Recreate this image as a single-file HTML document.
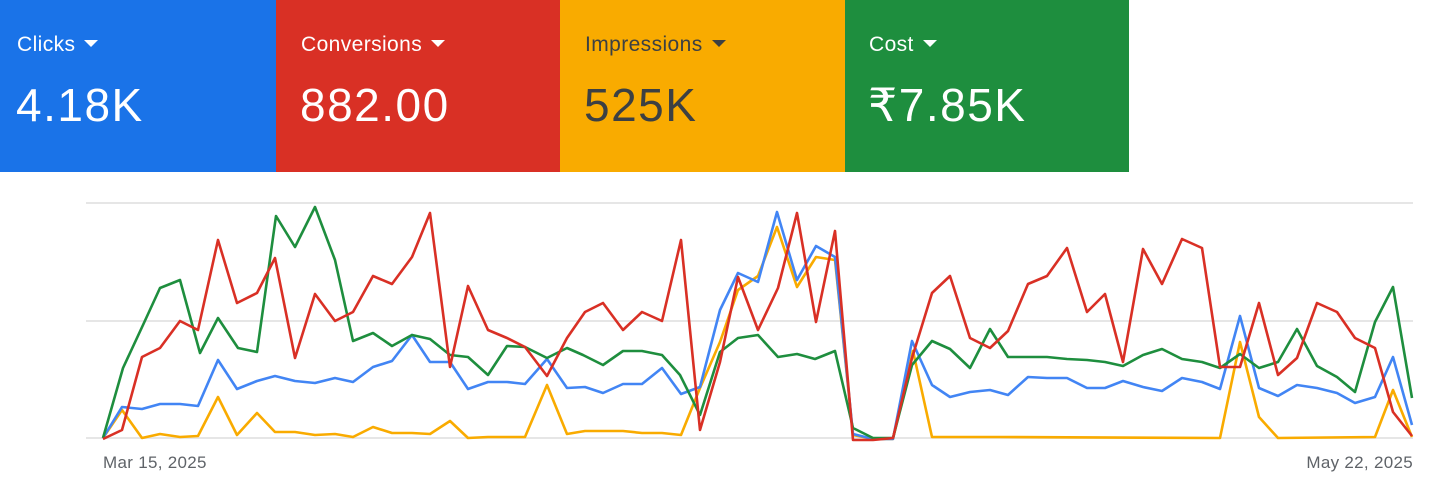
<!DOCTYPE html>
<html><head><meta charset="utf-8"><style>
body{margin:0;width:1440px;height:501px;background:#fff;position:relative;overflow:hidden;font-family:"Liberation Sans",Arial,sans-serif}
.t{position:absolute;top:0;height:172px}
.l{position:absolute;top:33px;font-size:21px;letter-spacing:0.4px}
.v{position:absolute;top:78px;font-size:46px;letter-spacing:1.5px}
.a{display:inline-block;width:0;height:0;border-left:7px solid transparent;border-right:7px solid transparent;border-top:7px solid currentColor;vertical-align:middle;margin-left:9px;margin-top:-3px}
.d{position:absolute;top:453px;font-size:17px;color:#5f6368;letter-spacing:0.3px}
</style></head><body>
<div class="t" style="left:0;width:276px;background:#1a73e8;color:#fff"><div class="l" style="left:17px">Clicks<span class="a"></span></div><div class="v" style="left:16px">4.18K</div></div>
<div class="t" style="left:276px;width:284px;background:#d93025;color:#fff"><div class="l" style="left:25px">Conversions<span class="a"></span></div><div class="v" style="left:24px">882.00</div></div>
<div class="t" style="left:560px;width:285px;background:#f9ab00;color:#3c4043"><div class="l" style="left:25px">Impressions<span class="a"></span></div><div class="v" style="left:24px">525K</div></div>
<div class="t" style="left:845px;width:284px;background:#1e8e3e;color:#fff"><div class="l" style="left:24px">Cost<span class="a"></span></div><div class="v" style="left:23px">₹7.85K</div></div>
<svg width="1440" height="501" style="position:absolute;left:0;top:0" fill="none" stroke-width="2.6" stroke-linejoin="round">
<g stroke="#e6e6e6" stroke-width="2"><line x1="86" y1="203" x2="1413" y2="203"/><line x1="86" y1="321" x2="1413" y2="321"/><line x1="86" y1="438" x2="1413" y2="438"/></g>
<polyline stroke="#f9ab00" points="103,438 122,410 142,438 160,434 180,437 198,436 218,397 237,435 257,413 275,432 295,432 315,435 335,434 353,437 373,427 392,433 412,433 430,434 450,421 468,438 488,437 507,437 525,437 547,385 567,434 585,431 603,431 623,431 642,433 662,433 681,435 700,388 720,342 738,290 758,276 777,227 797,287 816,257 835,260 853,435 873,439 893,439 913,351 932,437 1000,437 1220,438 1240,342 1259,417 1278,438 1375,437 1393,390 1412,437"/>
<polyline stroke="#4285f4" points="103,438 122,407 142,409 160,404 180,404 198,406 218,360 237,389 257,381 275,376 295,381 315,383 335,378 353,382 373,367 392,361 412,335 430,362 450,362 468,389 488,382 507,382 525,384 547,359 567,388 585,387 603,393 623,384 642,384 662,368 681,394 700,387 720,310 738,273 758,282 777,212 797,280 816,246 835,257 853,434 873,439 893,439 912,341 932,385 950,397 970,392 990,390 1008,395 1028,377 1047,378 1067,378 1087,388 1105,388 1123,381 1143,387 1162,391 1182,378 1202,382 1220,389 1240,316 1259,388 1278,396 1297,385 1317,388 1337,393 1355,403 1375,397 1393,357 1412,425"/>
<polyline stroke="#1e8e3e" points="103,438 123,368 143,325 160,288 180,280 200,353 218,318 238,348 257,352 276,216 295,247 315,207 335,260 353,341 373,333 392,346 412,335 430,339 450,355 468,357 488,375 507,346 525,347 547,358 567,348 583,355 603,365 623,351 642,351 662,355 680,375 700,415 720,352 738,338 758,335 778,357 797,354 815,359 835,351 853,428 873,438 893,438 912,365 932,341 950,349 970,368 990,329 1008,357 1028,357 1047,357 1067,359 1087,360 1105,362 1123,366 1143,355 1162,349 1182,359 1202,362 1220,368 1240,354 1259,368 1278,362 1297,329 1317,366 1337,377 1355,392 1375,322 1393,287 1412,398"/>
<polyline stroke="#d93025" points="103,439 122,430 142,357 160,348 180,321 198,330 218,240 237,303 257,293 275,258 295,358 315,294 335,321 353,312 373,276 392,284 412,257 430,213 450,367 468,286 488,330 507,338 525,347 547,376 567,338 585,312 603,303 623,330 642,312 662,321 681,240 700,430 720,362 738,277 758,330 778,288 797,213 816,322 835,231 853,440 873,440 893,438 912,358 932,293 950,276 970,338 990,348 1008,331 1028,284 1047,276 1067,248 1087,312 1105,294 1123,362 1143,249 1162,284 1182,239 1202,248 1220,367 1240,367 1259,303 1278,375 1297,358 1317,303 1337,312 1355,338 1375,348 1393,412 1412,436"/>
</svg>
<div class="d" style="left:103px">Mar 15, 2025</div>
<div class="d" style="right:27px">May 22, 2025</div>
</body></html>
